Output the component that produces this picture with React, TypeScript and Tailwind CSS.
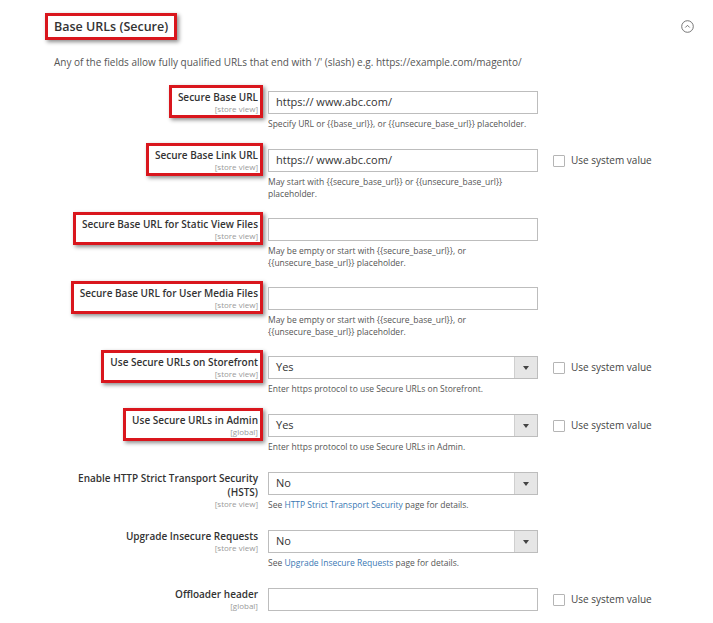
import React from 'react';

type Row = {
  label: React.ReactNode;
  scope: string;
  kind: 'input' | 'select';
  value?: string;
  note?: React.ReactNode;
  system?: boolean;
  marked?: boolean;
  tall?: boolean;
  twoLineNote?: boolean;
};

const link = 'text-[#3a78b4]';

const rows: Row[] = [
  {
    label: 'Secure Base URL',
    scope: '[store view]',
    kind: 'input',
    value: 'https:// www.abc.com/',
    note: 'Specify URL or {{base_url}}, or {{unsecure_base_url}} placeholder.',
    marked: true,
  },
  {
    label: 'Secure Base Link URL',
    scope: '[store view]',
    kind: 'input',
    value: 'https:// www.abc.com/',
    note: (
      <>
        May start with {'{{secure_base_url}}'} or {'{{unsecure_base_url}}'}
        <br />
        placeholder.
      </>
    ),
    system: true,
    marked: true,
    twoLineNote: true,
  },
  {
    label: 'Secure Base URL for Static View Files',
    scope: '[store view]',
    kind: 'input',
    note: (
      <>
        May be empty or start with {'{{secure_base_url}}'}, or
        <br />
        {'{{unsecure_base_url}}'} placeholder.
      </>
    ),
    marked: true,
    twoLineNote: true,
  },
  {
    label: 'Secure Base URL for User Media Files',
    scope: '[store view]',
    kind: 'input',
    note: (
      <>
        May be empty or start with {'{{secure_base_url}}'}, or
        <br />
        {'{{unsecure_base_url}}'} placeholder.
      </>
    ),
    marked: true,
    twoLineNote: true,
  },
  {
    label: 'Use Secure URLs on Storefront',
    scope: '[store view]',
    kind: 'select',
    value: 'Yes',
    note: 'Enter https protocol to use Secure URLs on Storefront.',
    system: true,
    marked: true,
  },
  {
    label: 'Use Secure URLs in Admin',
    scope: '[global]',
    kind: 'select',
    value: 'Yes',
    note: 'Enter https protocol to use Secure URLs in Admin.',
    system: true,
    marked: true,
  },
  {
    label: (
      <>
        Enable HTTP Strict Transport Security
        <br />
        (HSTS)
      </>
    ),
    scope: '[store view]',
    kind: 'select',
    value: 'No',
    note: (
      <>
        See <span className={link}>HTTP Strict Transport Security</span> page for details.
      </>
    ),
    tall: true,
  },
  {
    label: 'Upgrade Insecure Requests',
    scope: '[store view]',
    kind: 'select',
    value: 'No',
    note: (
      <>
        See <span className={link}>Upgrade Insecure Requests</span> page for details.
      </>
    ),
  },
  {
    label: 'Offloader header',
    scope: '[global]',
    kind: 'input',
    system: true,
  },
];

function Field({ row }: { row: Row }) {
  if (row.kind === 'select') {
    return (
      <div className="flex h-[23px] w-[270px] border border-[#bdbdbd] bg-white">
        <div className="flex flex-1 items-center pl-[7px] text-[11px] text-[#333]">{row.value}</div>
        <div className="flex w-[23px] items-center justify-center border-l border-[#cfcfcf] bg-[#e6e6e6]">
          <svg width="6" height="4" viewBox="0 0 6 4">
            <path d="M0 0h6L3 4z" fill="#444" />
          </svg>
        </div>
      </div>
    );
  }
  return (
    <div className="flex h-[23px] w-[270px] items-center border border-[#bdbdbd] bg-white pl-[7px] text-[11px] text-[#333]">
      {row.value}
    </div>
  );
}

function FieldRow({ row }: { row: Row }) {
  return (
    <div className={'flex items-start ' + (row.twoLineNote ? 'mb-[12px]' : 'mb-[13px]')}>
      <div className={'flex w-[263px] justify-end ' + (row.tall ? '-mb-[4px]' : '')}>
        <div
          className={
            'border-[3px] pb-[2px] pl-[6px] pr-[2px] pt-[2px] text-right ' +
            (row.marked
              ? 'border-[#d9161d] shadow-[2px_2px_4px_rgba(0,0,0,0.45)]'
              : 'border-transparent')
          }
        >
          <div className="text-[10px] font-semibold leading-[14px] text-[#333]">{row.label}</div>
          <div className="text-[8px] leading-[9px] text-[#9a9a9a]">{row.scope}</div>
        </div>
      </div>
      <div className="ml-[5px] mt-[6px] w-[270px]">
        <Field row={row} />
        {row.note && (
          <div className="mt-[4px] text-[8.5px] leading-[12px] text-[#555]">{row.note}</div>
        )}
      </div>
      {row.system && (
        <label className="ml-[15px] mt-[6px] flex h-[23px] items-center gap-[6px]">
          <span className="h-[12px] w-[12px] rounded-[1px] border border-[#b5b5b5] bg-white" />
          <span className="text-[10px] text-[#444]">Use system value</span>
        </label>
      )}
    </div>
  );
}

export default function App() {
  return (
    <div
      className="h-[623px] w-[713px] overflow-hidden bg-white pt-[13px]"
      style={{ fontFamily: '"Open Sans", "Liberation Sans", sans-serif' }}
    >
      <div className="flex items-center justify-between pl-[45px] pr-[19px]">
        <div className="border-[3px] border-[#d9161d] px-[6px] py-[2px] text-[12.5px] font-semibold leading-[17px] text-[#333] shadow-[2px_2px_4px_rgba(0,0,0,0.45)]">
          Base URLs (Secure)
        </div>
        <svg width="13" height="13" viewBox="0 0 13 13">
          <circle cx="6.5" cy="6.5" r="5.8" fill="none" stroke="#666" strokeWidth="0.9" />
          <path d="M4.3 7.5 6.5 5.3 8.7 7.5" fill="none" stroke="#666" strokeWidth="0.9" />
        </svg>
      </div>
      <p className="mt-[16px] pl-[54px] text-[10px] leading-[13px] text-[#555]">
        Any of the fields allow fully qualified URLs that end with '/' (slash) e.g. https://example.com/magento/
      </p>
      <div className="mt-[16px]">
        {rows.map((row, i) => (
          <FieldRow key={i} row={row} />
        ))}
      </div>
    </div>
  );
}
